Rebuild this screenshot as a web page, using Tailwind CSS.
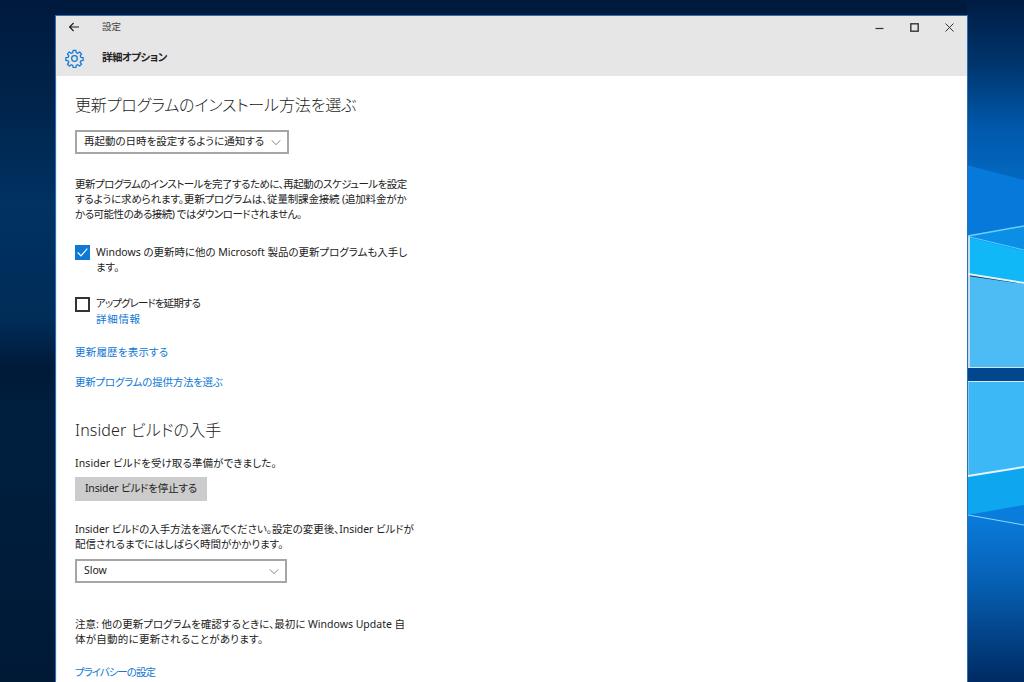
<!DOCTYPE html>
<html lang="ja">
  <head>
    <meta charset="UTF-8" />
    <meta name="viewport" content="width=device-width, initial-scale=1.0"/>
    <title>設定</title>
    <script src="https://cdn.jsdelivr.net/npm/@tailwindcss/browser@4"></script>
  </head>
  <body class="relative w-[1024px] h-[682px] overflow-hidden bg-[#001c3e] font-['Noto_Sans','Noto_Sans_CJK_JP',sans-serif] [font-feature-settings:'palt'] text-[#222]">
    <!-- Desktop wallpaper -->
    <svg class="absolute inset-0" width="1024" height="682" viewBox="0 0 1024 682" xmlns="http://www.w3.org/2000/svg">
      <defs>
        <linearGradient id="left-bg" x1="0" y1="0" x2="0" y2="1">
          <stop offset="0" stop-color="#001a3d"/>
          <stop offset="0.14" stop-color="#00234a"/>
          <stop offset="0.3" stop-color="#003262"/>
          <stop offset="0.47" stop-color="#002c58"/>
          <stop offset="0.54" stop-color="#001a38"/>
          <stop offset="0.6" stop-color="#001f40"/>
          <stop offset="1" stop-color="#001a36"/>
        </linearGradient>
        <linearGradient id="right-top" x1="0" y1="0" x2="0" y2="1">
          <stop offset="0" stop-color="#001c42"/>
          <stop offset="0.35" stop-color="#00346c"/>
          <stop offset="0.7" stop-color="#0058aa"/>
          <stop offset="1" stop-color="#0468c0"/>
        </linearGradient>
        <linearGradient id="right-bottom" x1="0" y1="0" x2="0" y2="1">
          <stop offset="0" stop-color="#0a7cdc"/>
          <stop offset="0.4" stop-color="#0660b4"/>
          <stop offset="1" stop-color="#002a62"/>
        </linearGradient>
      </defs>
      <rect width="1024" height="682" fill="url(#left-bg)"/>
      <rect x="967" width="57" height="180" fill="url(#right-top)"/>
      <polygon points="967,165 1024,180 1024,240 967,240" fill="#0679da"/>
      <polygon points="968,235 1024,226 1024,283 968,274" fill="#0a8ee6"/>
      <polygon points="970,238 1024,251 1024,283 970,274" fill="#10b8f8"/>
      <polygon points="968,276 1024,284 1024,367 968,367" fill="#4ebcf4"/>
      <rect x="967" y="367" width="57" height="14" fill="#02468e"/>
      <polygon points="968,382 1024,382 1024,467 968,476" fill="#3cb8f6"/>
      <polygon points="967,476 1024,467 1024,525 967,515" fill="#0ea6ee"/>
      <polygon points="967,515 1024,505 1024,525" fill="#0a7cdc"/>
      <polygon points="967,515 1024,525 1024,682 967,682" fill="url(#right-bottom)"/>
      <line x1="969" y1="236" x2="969" y2="367" stroke="#c4dcea" stroke-width="2"/>
      <line x1="968.5" y1="382" x2="968.5" y2="476" stroke="#8fc4e4" stroke-width="1"/>
      <line x1="968" y1="236" x2="1024" y2="226" stroke="#6ecff6" stroke-width="1.5"/>
      <line x1="970" y1="237" x2="1024" y2="250" stroke="#5ccdf8" stroke-width="1"/>
      <line x1="968" y1="274" x2="1024" y2="283" stroke="#e4f4fb" stroke-width="2"/>
      <line x1="968" y1="367.5" x2="1024" y2="367.5" stroke="#cfe8f6" stroke-width="1"/>
      <line x1="968" y1="381.5" x2="1024" y2="381.5" stroke="#cfe8f6" stroke-width="1"/>
      <line x1="968" y1="476" x2="1024" y2="467" stroke="#e4f4fb" stroke-width="2"/>
      <line x1="968" y1="515" x2="1024" y2="525" stroke="#8fd8f8" stroke-width="1"/>
    </svg>

    <!-- Settings window -->
    <div class="absolute left-[55px] top-[15px] w-[913px] h-[680px] flex flex-col bg-white border border-[#2a6eb4] border-b-0">
      <header class="bg-[#e6e6e6] h-[60px] shrink-0 flex flex-col">
        <div class="h-[22px] flex items-center">
          <svg class="ml-[13px] w-[10px] h-[10px]" viewBox="0 0 10 10" fill="none" stroke="#1a1a1a" stroke-width="1.1">
            <path d="M0.6 5H10M4.6 1 0.6 5 4.6 9"/>
          </svg>
          <span class="ml-[23px] text-[9.5px] text-[#444]">設定</span>
          <div class="ml-auto flex items-center">
            <svg class="w-[9px] h-[9px] mr-[26px]" viewBox="0 0 9 9" stroke="#333" fill="none"><path d="M0.5 5.5H8.5" stroke-width="1.2"/></svg>
            <svg class="w-[9px] h-[9px] mr-[26px]" viewBox="0 0 9 9" stroke="#333" fill="none"><rect x="0.8" y="0.8" width="7.4" height="7.4" stroke-width="1.4"/></svg>
            <svg class="w-[9px] h-[9px] mr-[13px]" viewBox="0 0 9 9" stroke="#333" fill="none"><path d="M0.5 0.5 8.5 8.5M8.5 0.5 0.5 8.5" stroke-width="1"/></svg>
          </div>
        </div>
        <div class="flex-1 flex items-center pt-[2px]">
          <svg class="ml-[9px] w-[19px] h-[19px]" viewBox="0 0 24 24" fill="none" stroke="#1479d6" stroke-width="1.6" stroke-linejoin="round">
            <path d="M10.3 1.8h3.4l.5 2.9 1.9.8 2.4-1.7 2.4 2.4-1.7 2.4.8 1.9 2.9.5v3.4l-2.9.5-.8 1.9 1.7 2.4-2.4 2.4-2.4-1.7-1.9.8-.5 2.9h-3.4l-.5-2.9-1.9-.8-2.4 1.7-2.4-2.4 1.7-2.4-.8-1.9-2.9-.5v-3.4l2.9-.5.8-1.9-1.7-2.4 2.4-2.4 2.4 1.7 1.9-.8z"/>
            <circle cx="12" cy="12" r="3.6"/>
          </svg>
          <h1 class="ml-[18px] text-[10.5px] font-bold tracking-[-0.55px]">詳細オプション</h1>
        </div>
      </header>

      <main class="pl-[18px] border-l border-[#dff2fb] flex flex-col items-start">
        <h2 class="mt-[16px] text-[16px] leading-[26px] font-light whitespace-nowrap tracking-[-0.15px]">更新プログラムのインストール方法を選ぶ</h2>
        <div class="mt-[12px] w-[214px] h-[24px] border-2 border-[#a6a6a6] flex items-center justify-between pl-[7px] pr-[6px] text-[10.5px]">
          <span class="whitespace-nowrap">再起動の日時を設定するように通知する</span>
          <svg class="w-[10px] h-[5px]" viewBox="0 0 10 5" fill="none" stroke="#888"><path d="M.5.2 5 4.6 9.5.2"/></svg>
        </div>
        <p class="mt-[23px] text-[10.5px] leading-[15px] whitespace-nowrap">
          <span class="block tracking-[-0.52px]">更新プログラムのインストールを完了するために、再起動のスケジュールを設定</span>
          <span class="block tracking-[-0.17px]">するように求められます。更新プログラムは、従量制課金接続 (追加料金がか</span>
          <span class="block tracking-[-0.5px]">かる可能性のある接続) ではダウンロードされません。</span>
        </p>

        <div class="mt-[23px] flex items-start gap-[6px]">
          <span class="w-[15px] h-[15px] bg-[#0f78d4] flex items-center justify-center">
            <svg class="w-[11px] h-[9px]" viewBox="0 0 11 9" fill="none" stroke="#fff" stroke-width="1.2"><path d="M.7 4.5 4 7.8 10.3.7"/></svg>
          </span>
          <p class="text-[10.5px] leading-[15px] whitespace-nowrap tracking-[-0.02px]">Windows の更新時に他の Microsoft 製品の更新プログラムも入手し<br>ます。</p>
        </div>
        <div class="mt-[20px] flex items-start gap-[6px]">
          <span class="w-[15px] h-[15px] mt-[2px] border-2 border-[#333]"></span>
          <div class="text-[10.5px] leading-[16px]">
            <p class="tracking-[-0.9px]">アップグレードを延期する</p>
            <a class="text-[#0f78d4] block tracking-[0.7px]">詳細情報</a>
          </div>
        </div>
        <a class="mt-[18px] text-[10.5px] leading-[15px] text-[#0f78d4] tracking-[0.2px]">更新履歴を表示する</a>
        <a class="mt-[15px] text-[10.5px] leading-[15px] text-[#0f78d4] tracking-[-0.25px]">更新プログラムの提供方法を選ぶ</a>

        <h2 class="mt-[27px] text-[16px] leading-[26px] font-light whitespace-nowrap tracking-[0.15px]">Insider ビルドの入手</h2>
        <p class="mt-[13px] text-[10.5px] leading-[15px] tracking-[0.1px]">Insider ビルドを受け取る準備ができました。</p>
        <button class="mt-[6px] w-[132px] h-[24px] bg-[#cccccc] text-[10.5px] tracking-[-0.15px]">Insider ビルドを停止する</button>
        <p class="mt-[21px] text-[10.5px] leading-[15px] whitespace-nowrap tracking-[-0.07px]">Insider ビルドの入手方法を選んでください。設定の変更後、Insider ビルドが<br>配信されるまでにはしばらく時間がかかります。</p>
        <div class="mt-[7px] w-[212px] h-[24px] border-2 border-[#a6a6a6] flex items-center justify-between pl-[7px] pr-[6px] text-[10.5px]">
          <span>Slow</span>
          <svg class="w-[10px] h-[5px]" viewBox="0 0 10 5" fill="none" stroke="#888"><path d="M.5.2 5 4.6 9.5.2"/></svg>
        </div>
        <p class="mt-[34px] text-[10.5px] leading-[15px] whitespace-nowrap">注意: 他の更新プログラムを確認するときに、最初に Windows Update 自<br><span class="tracking-[0.25px]">体が自動的に更新されることがあります。</span></p>
        <a class="mt-[18px] text-[10.5px] leading-[15px] text-[#0f78d4] tracking-[-1px]">プライバシーの設定</a>
      </main>
    </div>
  </body>
</html>
